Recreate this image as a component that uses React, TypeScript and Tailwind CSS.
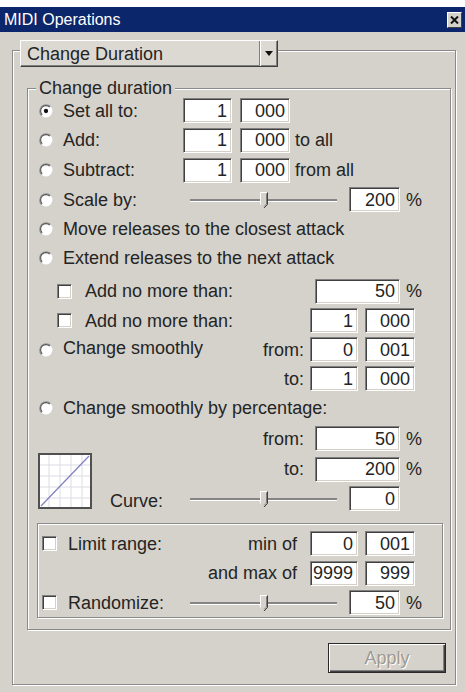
import React from "react";

function Radio({ checked = false }: { checked?: boolean }) {
  return (
    <svg width="14" height="14" viewBox="0 0 13 13" className="shrink-0">
      <circle cx="6.5" cy="6.5" r="6" fill="#ffffff" />
      <path d="M2.26 10.74 A6 6 0 0 1 10.74 2.26" fill="none" stroke="#8a8a8a" strokeWidth="1" />
      <path d="M2.96 10.04 A5 5 0 0 1 10.04 2.96" fill="none" stroke="#505050" strokeWidth="1" />
      {checked && <circle cx="6.5" cy="6.5" r="2" fill="#111111" />}
    </svg>
  );
}

function Check() {
  return (
    <div className="w-[15px] h-[15px] shrink-0 bg-white border border-t-[#808080] border-l-[#808080] border-b-white border-r-white shadow-[inset_1px_1px_0_#404040,inset_-1px_-1px_0_#d4d0c8]" />
  );
}

function Field({ className, v }: { className: string; v: string }) {
  return (
    <div
      className={
        "h-[25px] shrink-0 bg-white border border-t-[#808080] border-l-[#808080] border-b-white border-r-white shadow-[inset_1px_1px_0_#404040,inset_-1px_-1px_0_#d4d0c8] flex items-center justify-end pr-[4px] " +
        className
      }
    >
      {v}
    </div>
  );
}

function Slider() {
  return (
    <div className="relative w-[147px] h-[20px] shrink-0">
      <div className="mt-[9px] h-[3px] border-t-2 border-t-[#858585] border-b border-b-white" />
      <svg width="8" height="17" viewBox="0 0 8 17" className="absolute left-[70px] top-[2px]">
        <path d="M0.5 0.5 H7.5 V12.5 L4 16 L0.5 12.5 Z" fill="#d5d2cb" />
        <path d="M0.5 12.5 V0.5 H7" fill="none" stroke="#ffffff" />
        <path d="M7.5 0.5 V12.5 L4 16" fill="none" stroke="#404040" />
        <path d="M6.5 1.5 V12 L4 14.5" fill="none" stroke="#808080" />
      </svg>
    </div>
  );
}

function CurvePic() {
  const lines = [11, 22, 33, 44];
  return (
    <svg width="54" height="56" viewBox="0 0 54 56" className="shrink-0 mt-[30px]">
      <rect x="0" y="0" width="54" height="56" fill="#ffffff" />
      {lines.map((p) => (
        <line key={"v" + p} x1={p} y1="2" x2={p} y2="54" stroke="#dcdce4" strokeWidth="1" />
      ))}
      {lines.map((p) => (
        <line key={"h" + p} x1="2" y1={p + 1} x2="52" y2={p + 1} stroke="#dcdce4" strokeWidth="1" />
      ))}
      <line x1="3" y1="53" x2="51" y2="3" stroke="#7f7fbf" strokeWidth="1.2" />
      <rect x="1" y="1" width="52" height="54" fill="none" stroke="#505050" strokeWidth="2" />
    </svg>
  );
}

function Row({ h, children, extra = "" }: { h: string; children: React.ReactNode; extra?: string }) {
  return <div className={"flex items-center " + h + " " + extra}>{children}</div>;
}

export default function App() {
  return (
    <div className="w-[465px] h-[692px] bg-white font-['Liberation_Sans',Arial,sans-serif] text-[#242424] text-[18px] leading-[20px] overflow-hidden">
      <div className="pt-[7px] h-full">
        <div className="h-full flex flex-col bg-[#d5d2cb]">
          {/* Title bar */}
          <div className="h-[25px] shrink-0 bg-[#0c266b] flex items-center justify-between pl-[4px] pr-[3px]">
            <span className="text-white text-[16px] leading-none">MIDI Operations</span>
            <div className="w-[15px] h-[16px] bg-[#d5d2cb] border border-t-white border-l-white border-r-[#404040] border-b-[#404040] flex items-center justify-center">
              <svg width="9" height="8" viewBox="0 0 9 8">
                <path d="M1 0.5 L8 7.5 M8 0.5 L1 7.5" stroke="#111" strokeWidth="2" />
              </svg>
            </div>
          </div>

          {/* Body */}
          <div className="pl-[12px] pt-[8px]">
            {/* Dropdown */}
            <div className="relative z-10 ml-[8px] w-[258px] h-[27px] bg-[#dcd9d3] border border-t-white border-l-white border-r-[#404040] border-b-[#404040] shadow-[inset_-1px_-1px_0_#808080] flex items-center">
              <span className="flex-1 pl-[6px] text-[18px] leading-none">Change Duration</span>
              <div className="w-[18px] h-full border-l border-l-[#808080] shadow-[inset_1px_0_0_#fff] flex items-center justify-center">
                <svg width="8" height="5" viewBox="0 0 8 5">
                  <path d="M0 0 H8 L4 5 Z" fill="#111" />
                </svg>
              </div>
            </div>

            {/* Outer group */}
            <div className="-mt-[17px] w-[444px] h-[635px] border border-[#8a8a8a] shadow-[inset_1px_1px_0_#fff,1px_1px_0_#fff] pl-[14px] pt-[37px] flex flex-col">
              {/* Inner group */}
              <div className="relative w-[424px] h-[542px] shrink-0 border border-[#8a8a8a] shadow-[inset_1px_1px_0_#fff,1px_1px_0_#fff] pt-[7px]">
                <span className="absolute left-[8px] -top-[11px] px-[3px] bg-[#d5d2cb]">Change duration</span>

                <Row h="h-[29px]">
                  <div className="w-[155px] flex items-center pl-[11px] gap-[10px]">
                    <Radio checked />
                    <span>Set all to:</span>
                  </div>
                  <Field className="w-[49px]" v="1" />
                  <Field className="ml-[8px] w-[50px]" v="000" />
                </Row>
                <Row h="h-[30px]">
                  <div className="w-[155px] flex items-center pl-[11px] gap-[10px]">
                    <Radio />
                    <span>Add:</span>
                  </div>
                  <Field className="w-[49px]" v="1" />
                  <Field className="ml-[8px] w-[50px]" v="000" />
                  <span className="ml-[5px]">to all</span>
                </Row>
                <Row h="h-[30px]">
                  <div className="w-[155px] flex items-center pl-[11px] gap-[10px]">
                    <Radio />
                    <span>Subtract:</span>
                  </div>
                  <Field className="w-[49px]" v="1" />
                  <Field className="ml-[8px] w-[50px]" v="000" />
                  <span className="ml-[5px]">from all</span>
                </Row>
                <Row h="h-[29px]">
                  <div className="w-[162px] flex items-center pl-[11px] gap-[10px]">
                    <Radio />
                    <span>Scale by:</span>
                  </div>
                  <Slider />
                  <Field className="ml-[12px] w-[51px]" v="200" />
                  <span className="ml-[6px]">%</span>
                </Row>
                <Row h="h-[29px]">
                  <div className="flex items-center pl-[11px] gap-[10px]">
                    <Radio />
                    <span>Move releases to the closest attack</span>
                  </div>
                </Row>
                <Row h="h-[29px]">
                  <div className="flex items-center pl-[11px] gap-[10px]">
                    <Radio />
                    <span>Extend releases to the next attack</span>
                  </div>
                </Row>
                <Row h="h-[30px]" extra="mt-[4px]">
                  <div className="w-[287px] flex items-center pl-[29px] gap-[13px]">
                    <Check />
                    <span>Add no more than:</span>
                  </div>
                  <Field className="w-[85px]" v="50" />
                  <span className="ml-[6px]">%</span>
                </Row>
                <Row h="h-[29px]">
                  <div className="w-[282px] flex items-center pl-[29px] gap-[13px]">
                    <Check />
                    <span>Add no more than:</span>
                  </div>
                  <Field className="w-[48px]" v="1" />
                  <Field className="ml-[7px] w-[50px]" v="000" />
                </Row>
                <Row h="h-[29px]">
                  <div className="w-[282px] flex items-center pl-[11px] pr-[6px]">
                    <Radio />
                    <span className="ml-[10px] -mt-[3px]">Change smoothly</span>
                    <span className="ml-auto">from:</span>
                  </div>
                  <Field className="w-[48px]" v="0" />
                  <Field className="ml-[7px] w-[50px]" v="001" />
                </Row>
                <Row h="h-[29px]">
                  <div className="w-[282px] flex items-center justify-end pr-[6px]">
                    <span>to:</span>
                  </div>
                  <Field className="w-[48px]" v="1" />
                  <Field className="ml-[7px] w-[50px]" v="000" />
                </Row>
                <Row h="h-[30px]">
                  <div className="flex items-center pl-[11px] gap-[10px]">
                    <Radio />
                    <span>Change smoothly by percentage:</span>
                  </div>
                </Row>

                <div className="flex h-[90px]">
                  <div className="pl-[10px]">
                    <CurvePic />
                  </div>
                  <div className="flex flex-col">
                    <Row h="h-[31px]">
                      <div className="w-[223px] text-right pr-[11px]">from:</div>
                      <Field className="w-[85px]" v="50" />
                      <span className="ml-[6px]">%</span>
                    </Row>
                    <Row h="h-[30px]">
                      <div className="w-[223px] text-right pr-[11px]">to:</div>
                      <Field className="w-[85px]" v="200" />
                      <span className="ml-[6px]">%</span>
                    </Row>
                    <Row h="h-[29px]">
                      <div className="w-[98px] pl-[18px] pt-[4px]">Curve:</div>
                      <Slider />
                      <Field className="ml-[12px] w-[51px]" v="0" />
                    </Row>
                  </div>
                </div>

                {/* Limit / randomize box */}
                <div className="mt-[10px] ml-[9px] w-[406px] h-[95px] border border-[#8a8a8a] shadow-[inset_1px_1px_0_#fff,1px_1px_0_#fff] pt-[5px]">
                  <Row h="h-[29px]">
                    <div className="w-[272px] flex items-center pl-[4px] pr-[13px]">
                      <Check />
                      <span className="ml-[11px]">Limit range:</span>
                      <span className="ml-auto">min of</span>
                    </div>
                    <Field className="w-[48px]" v="0" />
                    <Field className="ml-[7px] w-[50px]" v="001" />
                  </Row>
                  <Row h="h-[30px]">
                    <div className="w-[272px] text-right pr-[13px]">and max of</div>
                    <Field className="w-[48px]" v="9999" />
                    <Field className="ml-[7px] w-[50px]" v="999" />
                  </Row>
                  <Row h="h-[29px]">
                    <div className="w-[152px] flex items-center pl-[4px] gap-[11px]">
                      <Check />
                      <span>Randomize:</span>
                    </div>
                    <Slider />
                    <Field className="ml-[12px] w-[51px]" v="50" />
                    <span className="ml-[6px]">%</span>
                  </Row>
                </div>
              </div>

              <div className="flex justify-end pr-[9px] mt-[13px]">
                <div className="w-[118px] h-[30px] border border-[#2a2a2a] shadow-[inset_1px_1px_0_#fff,inset_-1px_-1px_0_#404040,inset_-2px_-2px_0_#808080] flex items-center justify-center text-[#9d9a95] [text-shadow:1px_1px_0_#fff]">
                  Apply
                </div>
              </div>
            </div>
          </div>
        </div>
      </div>
    </div>
  );
}
